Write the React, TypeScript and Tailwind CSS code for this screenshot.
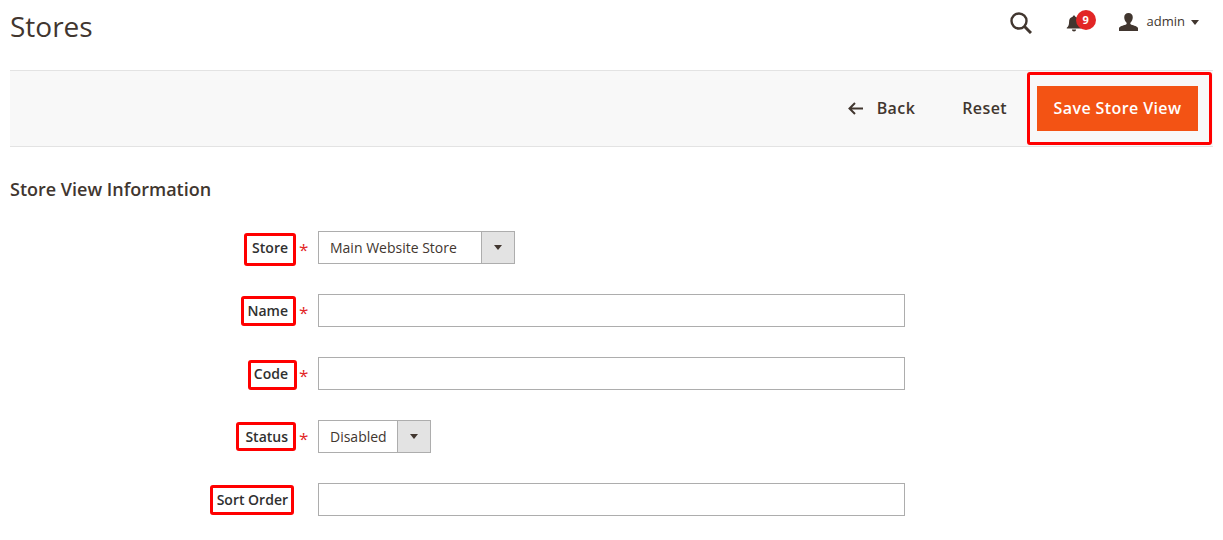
function Caret({ className }: { className: string }) {
  return (
    <svg viewBox="0 0 10 6" className={className}>
      <path d="M0 0h10L5 6z" fill="currentColor" />
    </svg>
  );
}

interface FieldRowProps {
  label: string;
  required?: boolean;
  boxClass: string;
  children: React.ReactNode;
}

function FieldRow({ label, required, boxClass, children }: FieldRowProps) {
  return (
    <div className="flex h-[33px] items-center">
      <div className="flex w-[308px] shrink-0 items-center justify-end">
        <span className={`rounded-[3px] border-[3px] border-[#f00] text-sm leading-none font-semibold whitespace-nowrap text-[#303030] ${boxClass}`}>
          {label}
        </span>
        <span className={`w-[21px] pt-[3px] pl-[2px] text-[17px] leading-none text-[#e22626] ${required ? '' : 'hidden'}`}>*</span>
      </div>
      {children}
    </div>
  );
}

function SelectBox({ value, widthClass, textWidthClass }: { value: string; widthClass: string; textWidthClass: string }) {
  return (
    <div className={`flex h-[33px] border border-[#adadad] bg-white text-sm text-[#41362f] ${widthClass}`}>
      <div className={`flex items-center pl-[11px] ${textWidthClass}`}>{value}</div>
      <div className="flex flex-1 items-center justify-center border-l border-[#adadad] bg-[#e3e3e3]">
        <Caret className="h-[5px] w-[8px] text-[#41362f]" />
      </div>
    </div>
  );
}

function TextBox() {
  return <div className="h-[33px] w-[587px] border border-[#adadad] bg-white" />;
}

export default function App() {
  return (
    <div className="h-[540px] w-[1223px] overflow-hidden bg-white pl-[10px] font-['Open_Sans',sans-serif] text-[#41362f]">
      <header className="flex h-[70px] w-[1203px] items-start justify-between">
        <h1 className="pt-[7px] text-[28px] leading-[38px] font-normal text-[#41362f]">Stores</h1>
        <div className="flex items-center pt-[10px] pr-[14px]">
          <svg viewBox="0 0 22 22" className="mt-[1px] h-[22px] w-[22px] text-[#41362f]">
            <circle cx="9" cy="9" r="7.500" fill="none" stroke="currentColor" strokeWidth="2.400" />
            <path d="M14.500 14.500l6.500 6.500" fill="none" stroke="currentColor" strokeWidth="3" />
          </svg>
          <div className="relative ml-[31px] h-[24px] w-[34px]">
            <svg viewBox="0 0 18 20" className="absolute top-[5px] left-[3px] h-[17px] w-[16px] text-[#41362f]">
              <path d="M9 0.500a1.500 1.500 0 0 1 1.500 1.600c3 .7 4.300 3 4.300 6 0 3.600.8 5 2.700 6.900v.9H.5v-.9c1.900-1.900 2.700-3.300 2.700-6.900 0-3 1.300-5.300 4.300-6A1.500 1.500 0 0 1 9 .5zM6.500 17h5a2.500 2.500 0 0 1-5 0z" fill="currentColor" />
            </svg>
            <span className="absolute top-0 left-[13px] flex h-[20px] w-[20px] items-center justify-center rounded-full bg-[#e22626] text-[11px] font-bold text-white">9</span>
          </div>
          <svg viewBox="0 0 20 20" preserveAspectRatio="none" className="ml-[22px] h-[18px] w-[19px] text-[#41362f]">
            <path d="M10 0c2.800 0 4.500 2 4.500 4.800 0 2.400-1 4.500-2.300 5.700-.4.4-.4 1.600.1 2 1.800 1.300 6.200 1.700 7.700 4V20H0v-3.500c1.500-2.300 5.900-2.700 7.700-4 .5-.4.5-1.600.1-2C6.500 9.300 5.500 7.200 5.500 4.800 5.500 2 7.200 0 10 0z" fill="currentColor" />
          </svg>
          <span className="ml-[9px] text-[13px] text-[#41362f]">admin</span>
          <Caret className="ml-[6px] h-[5px] w-[8px] text-[#41362f]" />
        </div>
      </header>

      <div className="flex h-[77px] w-[1203px] items-center justify-end border-y border-[#e3e3e3] bg-[#f8f8f8] pr-[1px]">
        <svg viewBox="0 0 15 13" className="h-[13px] w-[15px] text-[#41362f]">
          <path d="M7 1L1.500 6.500 7 12M2 6.500h13" fill="none" stroke="currentColor" strokeWidth="2" />
        </svg>
        <span className="mb-[1px] ml-[14px] text-base font-semibold tracking-[0.4px] text-[#41362f]">Back</span>
        <span className="mb-[1px] ml-[47px] text-base font-semibold tracking-[0.4px] text-[#41362f]">Reset</span>
        <div className="ml-[20px] rounded-[3px] border-[3px] border-[#f00] py-[11px] pr-[11px] pl-[7px]">
          <button className="h-[45px] w-[161px] bg-[#f35314] pb-[1px] text-base font-semibold tracking-[0.4px] text-white">Save Store View</button>
        </div>
      </div>

      <h2 className="mt-[29px] text-[18px] leading-[27px] font-semibold text-[#41362f]">Store View Information</h2>

      <div className="mt-[28px] flex flex-col gap-[30px]">
        <FieldRow label="Store" required boxClass="mt-[3px] mr-[1px] pt-[5px] pr-[5px] pb-[8px] pl-[5px]">
          <SelectBox value="Main Website Store" widthClass="w-[197px]" textWidthClass="w-[162px]" />
        </FieldRow>
        <FieldRow label="Name" required boxClass="mt-[1px] mr-[1px] pt-[5px] pr-[5px] pb-[5px] pl-[3px]">
          <TextBox />
        </FieldRow>
        <FieldRow label="Code" required boxClass="mt-[3px] pt-[4px] pr-[6px] pb-[6px] pl-[3px]">
          <TextBox />
        </FieldRow>
        <FieldRow label="Status" required boxClass="mr-[1px] pt-[5px] pr-[5px] pb-[4px] pl-[6px]">
          <SelectBox value="Disabled" widthClass="w-[113px]" textWidthClass="w-[78px]" />
        </FieldRow>
        <FieldRow label="Sort Order" boxClass="mr-[24px] py-[5px] pr-[3px] pl-[4px]">
          <TextBox />
        </FieldRow>
      </div>
    </div>
  );
}
